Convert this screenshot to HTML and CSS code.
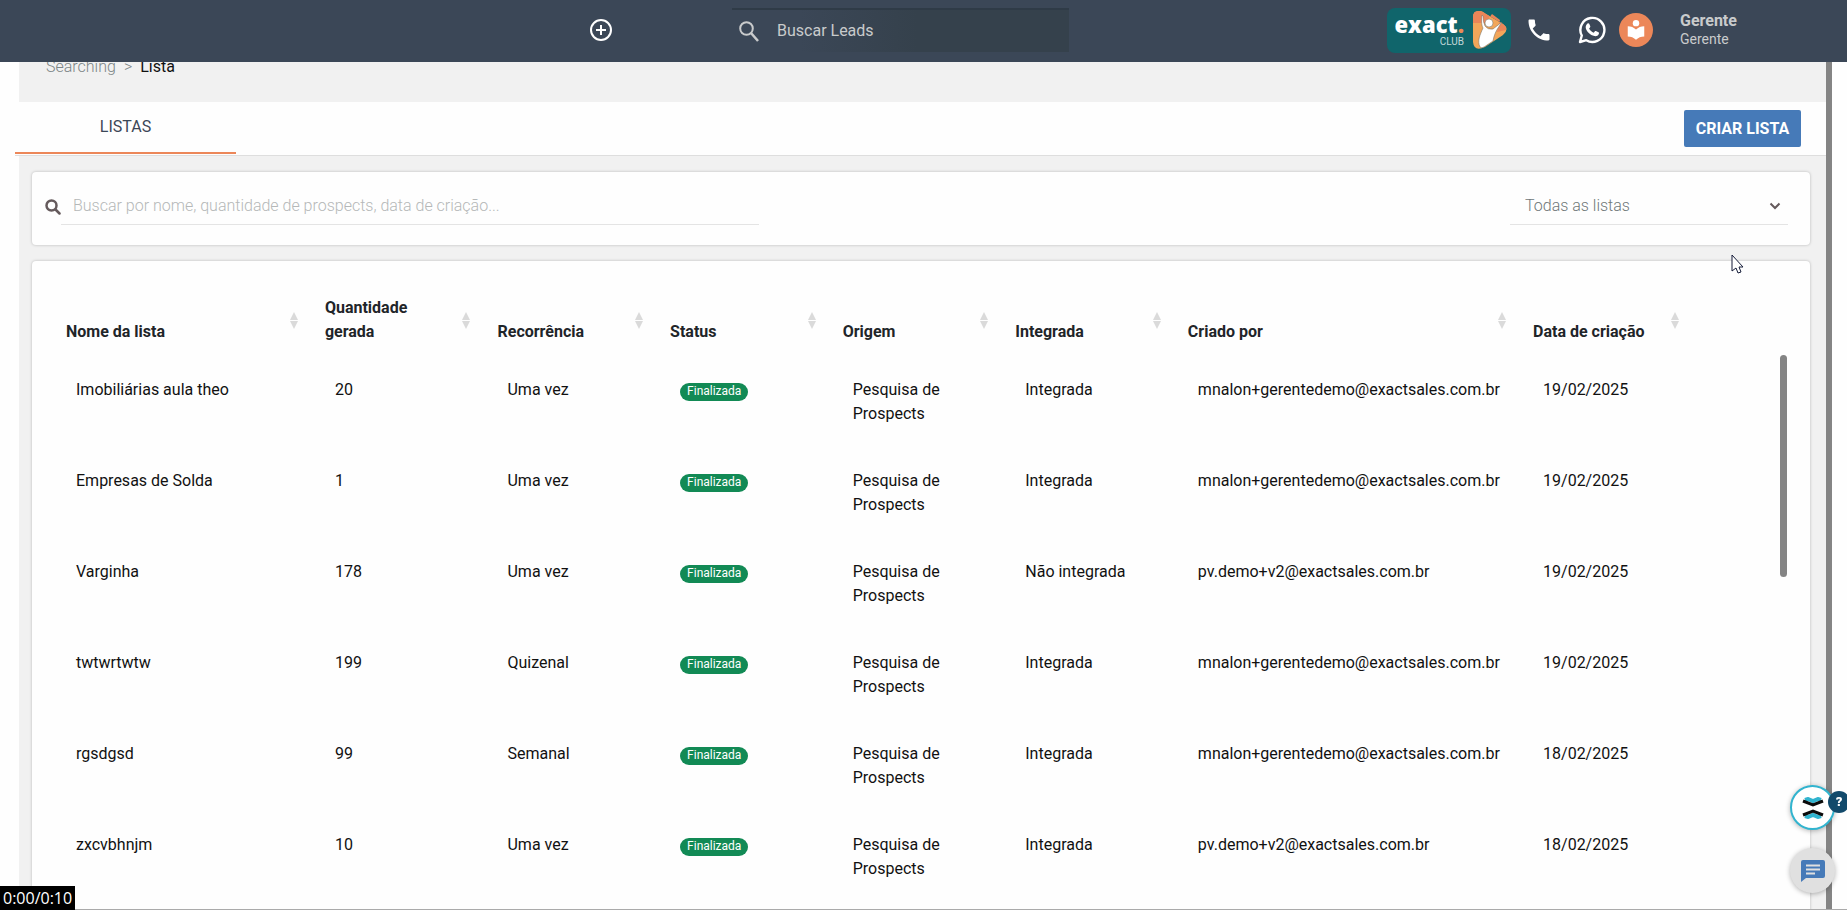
FILE: index.html
```html
<!DOCTYPE html>
<html lang="pt-BR">
<head>
    <meta charset="UTF-8">
    <meta name="viewport" content="width=device-width, initial-scale=1.0">
    <title>Listas</title>
    <link rel="stylesheet" href="styles.css">
</head>
<body>
<header class="topbar">
    <button class="icon-btn add-btn" type="button" aria-label="Adicionar">
        <svg width="24" height="24" viewBox="0 0 24 24" fill="none" stroke="#fff" stroke-width="2"><circle cx="12" cy="12" r="10"/><path d="M12 7v10M7 12h10"/></svg>
    </button>
    <label class="lead-search">
        <svg width="20" height="21" viewBox="0 0 20 21" fill="none" stroke="#c9cbcc" stroke-width="2"><circle cx="7.500" cy="7.500" r="6.300"/><path d="M12 12l7 8" stroke-width="2.500"/></svg>
        <input type="text" placeholder="Buscar Leads" aria-label="Buscar Leads">
    </label>
    <div class="top-actions">
        <a class="club" href="#">
            <span class="club-name">
                <strong>exact<span class="dot">.</span></strong>
                <small>CLUB</small>
            </span>
            <svg width="36" height="40" viewBox="0 0 36 40">
                <path d="M1 7Q1 0 8 1Q10 1 14 4L31 14Q38 19 31 25L13 37Q2 42 1 32Z" fill="#f2a65a"/>
                <path d="M1 13V7Q1 0 8 1Q10 1 14 4L31 14Q35 17 34 20L25 22L28 10L20 4L13 13Z" fill="#ea8558"/>
                <path d="M10 5C9 13 10 16 11 18C8 25 5 31 8 37Q10 39 15 35L21 31C22 25 24 21 26 18L30 12L21 19Q16 20 13 16Q11 12 11 6Z" fill="#fff" stroke="#6b665a" stroke-width=".5"/>
                <circle cx="17" cy="13" r="4" fill="#fff" stroke="#6b665a" stroke-width=".5"/>
            </svg>
        </a>
        <a class="phone" href="#" aria-label="Telefone">
            <svg width="28" height="28" viewBox="0 0 24 24" fill="#fff"><path d="M6.620 10.790c1.440 2.830 3.760 5.140 6.590 6.590l2.200-2.200c.27-.27.67-.36 1.020-.24 1.120.37 2.330.57 3.570.57.55 0 1 .45 1 1V20c0 .55-.45 1-1 1-9.390 0-17-7.610-17-17 0-.55.45-1 1-1h3.500c.55 0 1 .45 1 1 0 1.250.2 2.450.57 3.570.11.35.03.74-.25 1.020l-2.200 2.200z"/></svg>
        </a>
        <a class="whats" href="#" aria-label="WhatsApp">
            <svg width="28" height="28" viewBox="0 0 28 28"><path d="M2 26l1.800-6.500A12 12 0 1 1 8.300 24.200Z" fill="none" stroke="#fff" stroke-width="2.400" stroke-linejoin="round"/><path d="M9.500 7.500c.5-.5 1.400-.5 1.700.2l1.100 2.600c.1.400 0 .8-.3 1.100l-.9 1c1 2 2.600 3.400 4.600 4.300l1.200-1.500c.3-.3.7-.4 1-.2l2.600 1.300c.6.300.6 1 .3 1.700-.8 1.800-2.600 2.500-4.400 2.100-4.300-1-7.700-4.300-8.600-7.800-.4-1.800.3-3.600 1.700-4.800z" fill="#fff"/></svg>
        </a>
        <a class="reader" href="#" aria-label="Ajuda">
            <svg width="22" height="22" viewBox="0 0 24 24" fill="#fff"><circle cx="12" cy="4.500" r="3.500"/><path d="M12 11.550C9.640 9.350 6.480 8 3 8v11c3.480 0 6.640 1.350 9 3.550 2.360-2.190 5.520-3.550 9-3.550V8c-3.480 0-6.640 1.350-9 3.550z"/></svg>
        </a>
        <div class="user">
            <strong>Gerente</strong>
            <span>Gerente</span>
        </div>
    </div>
</header>

<div class="page">
    <main class="content">
        <nav class="breadcrumb">
            <a href="#">Searching</a>
            <span>&gt;</span>
            <span class="current">Lista</span>
        </nav>

        <div class="tabs">
            <a class="tab active" href="#">LISTAS</a>
            <button class="create-btn" type="button">CRIAR LISTA</button>
        </div>

        <section class="card filters">
            <svg class="filter-icon" width="16" height="16" viewBox="0 0 16 16" fill="none" stroke="#655a5c" stroke-width="2.500"><circle cx="6.500" cy="6.500" r="5"/><path d="M10.500 10.500l4 4" stroke-linecap="round"/></svg>
            <input class="filter-input" type="text" aria-label="Buscar" placeholder="Buscar por nome, quantidade de prospects, data de criação...">
            <label class="filter-select">
                <select aria-label="Filtrar listas">
                    <option>Todas as listas</option>
                </select>
                <svg width="12" height="8" viewBox="0 0 12 8" fill="none" stroke="#655a5c" stroke-width="2"><path d="M1.500 1.500L6 6l4.500-4.500"/></svg>
            </label>
        </section>

        <section class="card lists">
            <table class="lists-table">
                <colgroup>
                    <col class="w15"><col class="w10"><col class="w10"><col class="w10"><col class="w10"><col class="w10"><col class="w20"><col class="w10"><col class="w5">
                </colgroup>
                <thead>
                    <tr>
                        <th><div class="head">Nome da lista<i class="sort"></i></div></th>
                        <th><div class="head"><span>Quantidade<br>gerada</span><i class="sort"></i></div></th>
                        <th><div class="head">Recorrência<i class="sort"></i></div></th>
                        <th><div class="head">Status<i class="sort"></i></div></th>
                        <th><div class="head">Origem<i class="sort"></i></div></th>
                        <th><div class="head">Integrada<i class="sort"></i></div></th>
                        <th><div class="head">Criado por<i class="sort"></i></div></th>
                        <th><div class="head">Data de criação<i class="sort"></i></div></th>
                        <th></th>
                    </tr>
                </thead>
                <tbody>
                    <tr>
                        <td>Imobiliárias aula theo</td>
                        <td>20</td>
                        <td>Uma vez</td>
                        <td><span class="badge">Finalizada</span></td>
                        <td>Pesquisa de Prospects</td>
                        <td>Integrada</td>
                        <td>mnalon+gerentedemo@exactsales.com.br</td>
                        <td>19/02/2025</td>
                        <td></td>
                    </tr>
                    <tr>
                        <td>Empresas de Solda</td>
                        <td>1</td>
                        <td>Uma vez</td>
                        <td><span class="badge">Finalizada</span></td>
                        <td>Pesquisa de Prospects</td>
                        <td>Integrada</td>
                        <td>mnalon+gerentedemo@exactsales.com.br</td>
                        <td>19/02/2025</td>
                        <td></td>
                    </tr>
                    <tr>
                        <td>Varginha</td>
                        <td>178</td>
                        <td>Uma vez</td>
                        <td><span class="badge">Finalizada</span></td>
                        <td>Pesquisa de Prospects</td>
                        <td>Não integrada</td>
                        <td>pv.demo+v2@exactsales.com.br</td>
                        <td>19/02/2025</td>
                        <td></td>
                    </tr>
                    <tr>
                        <td>twtwrtwtw</td>
                        <td>199</td>
                        <td>Quizenal</td>
                        <td><span class="badge">Finalizada</span></td>
                        <td>Pesquisa de Prospects</td>
                        <td>Integrada</td>
                        <td>mnalon+gerentedemo@exactsales.com.br</td>
                        <td>19/02/2025</td>
                        <td></td>
                    </tr>
                    <tr>
                        <td>rgsdgsd</td>
                        <td>99</td>
                        <td>Semanal</td>
                        <td><span class="badge">Finalizada</span></td>
                        <td>Pesquisa de Prospects</td>
                        <td>Integrada</td>
                        <td>mnalon+gerentedemo@exactsales.com.br</td>
                        <td>18/02/2025</td>
                        <td></td>
                    </tr>
                    <tr>
                        <td>zxcvbhnjm</td>
                        <td>10</td>
                        <td>Uma vez</td>
                        <td><span class="badge">Finalizada</span></td>
                        <td>Pesquisa de Prospects</td>
                        <td>Integrada</td>
                        <td>pv.demo+v2@exactsales.com.br</td>
                        <td>18/02/2025</td>
                        <td></td>
                    </tr>
                </tbody>
            </table>
            <div class="table-scroll"></div>
        </section>
    </main>
    <div class="page-scroll"></div>
</div>

<div class="floating">
    <button class="fab assistant" type="button" aria-label="Assistente">
        <svg width="22" height="22" viewBox="0 0 22 22" fill="none" stroke-width="3"><path d="M3 3l3-1 5 2 5-2 3 1M3 19l3 1 5-2 5 2 3-1" stroke="#31b4cf" stroke-width="4"/><path d="M1 4l10 4 10-4M1 18l10-4 10 4" stroke="#0b0b0b"/></svg>
        <span class="help">?</span>
    </button>
    <button class="fab chat" type="button" aria-label="Chat">
        <svg width="24" height="24" viewBox="0 0 24 24"><path d="M2 1h20q2 0 2 2v14q0 2-2 2H5l-5 4V3q0-2 2-2z" fill="#467ab8"/><path d="M5 6.500h14M5 10.500h14M5 14.500h9" stroke="#e0e0e0" stroke-width="2"/></svg>
    </button>
</div>

<svg class="pointer" width="13" height="20" viewBox="0 0 13 20"><path d="M1 1v16l4-3 2 5 3-1-2-5h4z" fill="#fff" stroke="#141b38"/></svg>
<div class="player-time">0:00/0:10</div>
</body>
</html>
```
FILE: styles.css
```css
* {
    box-sizing: border-box;
}
body {
    margin: 0;
    height: 100vh;
    overflow: hidden;
    display: flex;
    flex-direction: column;
    background: #fefefe;
    color: #1f2529;
    font-family: Roboto, sans-serif;
    font-size: 16px;
    line-height: 24px;
    border-bottom: 1px solid #aaa;
}
a {
    color: inherit;
    text-decoration: none;
}
button, input, select {
    font: inherit;
}
svg {
    flex: none;
}

/* Top bar */
.topbar {
    position: relative;
    z-index: 2;
    flex: none;
    display: flex;
    align-items: center;
    height: 62px;
    padding: 0 111px 2px 589px;
    background: #3b4757;
}
.icon-btn {
    display: flex;
    padding: 0;
    border: none;
    background: none;
    cursor: pointer;
}
.lead-search {
    display: flex;
    align-items: center;
    gap: 18px;
    width: 337px;
    height: 44px;
    margin-left: 119px;
    padding-left: 7px;
    border-top: 2px solid #2f3b47;
    background: linear-gradient(90deg, #3b4757 20%, #35414c 55%);
}
.lead-search input {
    flex: 1;
    min-width: 0;
    padding: 0;
    border: none;
    outline: none;
    background: none;
    color: #c9cbcc;
}
.lead-search input::placeholder {
    color: #c9cbcc;
    opacity: 1;
}
.top-actions {
    display: flex;
    align-items: center;
    margin-left: auto;
}
.club {
    display: flex;
    align-items: center;
    gap: 8px;
    width: 124px;
    height: 45px;
    padding: 0 4px 0 8px;
    border-radius: 8px;
    background: #10656b;
    color: #fff;
}
.club-name {
    display: flex;
    flex-direction: column;
    align-items: flex-end;
    width: 69px;
}
.club-name strong {
    font: 800 22px/24px "Open Sans", sans-serif;
}
.club-name small {
    font-size: 10px;
    line-height: 12px;
    color: #c3d8d9;
}
.dot {
    color: #ee8a55;
}
.phone, .whats {
    display: flex;
}
.phone {
    margin-left: 14px;
}
.whats {
    margin-left: 25px;
}
.reader {
    display: flex;
    align-items: center;
    justify-content: center;
    width: 34px;
    height: 34px;
    margin-left: 13px;
    border-radius: 50%;
    background: #ec8759;
}
.user {
    display: flex;
    flex-direction: column;
    width: 56px;
    margin-left: 27px;
    color: #c9cbcc;
    font-size: 14px;
    line-height: 18px;
}
.user strong {
    font-size: 16px;
}

/* Page */
.page {
    flex: 1;
    min-height: 0;
    display: flex;
    padding: 0 15px 0 19px;
}
.content {
    flex: 1;
    min-width: 0;
    background: #f1f1f1;
}
.page-scroll {
    width: 6px;
    background: #848484;
}
.breadcrumb {
    display: flex;
    gap: 8px;
    margin-top: -7px;
    padding: 0 27px 23px;
    color: #7c8586;
    font-weight: 300;
}
.breadcrumb .current {
    color: #111;
    font-weight: 400;
}
.tabs {
    display: flex;
    justify-content: space-between;
    align-items: center;
    height: 54px;
    margin-left: -4px;
    padding-right: 25px;
    border-bottom: 1px solid #dedede;
    background: #fefefe;
}
.tab {
    width: 221px;
    height: 51px;
    padding-top: 12px;
    border-bottom: 2px solid #ec8759;
    color: #3b4757;
    text-align: center;
}
.create-btn {
    width: 117px;
    height: 37px;
    padding: 0;
    border: none;
    border-radius: 2px;
    background: #467ab8;
    color: #fff;
    font-weight: 700;
    cursor: pointer;
}
.card {
    margin: 16px 16px 0 13px;
    border-radius: 4px;
    background: #fefefe;
    box-shadow: 0 0 3px rgba(0, 0, 0, 0.25);
}
.filters {
    display: flex;
    align-items: center;
    height: 73px;
    padding: 0 22px 4px 13px;
    font-weight: 300;
}
.filter-input {
    width: 698px;
    height: 36px;
    padding: 0 12px 2px;
    border: none;
    border-bottom: 1px solid #e4e4e4;
    outline: none;
    background: none;
}
.filter-input::placeholder {
    color: #b5b8b8;
    opacity: 1;
}
.filter-select {
    display: flex;
    align-items: center;
    width: 278px;
    height: 36px;
    margin-left: auto;
    padding: 0 7px 0 15px;
    border-bottom: 1px solid #e4e4e4;
}
.filter-select select {
    flex: 1;
    padding: 0;
    border: none;
    outline: none;
    appearance: none;
    background: none;
    color: #6f7778;
}

/* Lists table */
.lists {
    display: flex;
    height: 800px;
    padding: 35px 23px 0 25px;
}
.lists-table {
    flex: 1;
    align-self: flex-start;
    table-layout: fixed;
    border-collapse: collapse;
    text-align: left;
}
.w5 {
    width: 5%;
}
.w10 {
    width: 10%;
}
.w15 {
    width: 15%;
}
.w20 {
    width: 20%;
}
.lists-table th {
    padding: 0 18px 0 9px;
}
.head {
    display: flex;
    align-items: flex-end;
    justify-content: space-between;
    height: 48px;
    white-space: nowrap;
}
.lists-table td {
    height: 91px;
    padding: 34px 8px 9px 19px;
    color: #111;
    vertical-align: top;
}
.sort {
    align-self: center;
    display: flex;
    flex-direction: column;
    gap: 1px;
}
.sort::before, .sort::after {
    content: "";
    border: 4px solid transparent;
}
.sort::before {
    border-top: none;
    border-bottom: 8px solid #dadada;
}
.sort::after {
    border-bottom: none;
    border-top: 8px solid #dadada;
}
.badge {
    display: inline-block;
    height: 18px;
    padding: 0 7px;
    border-radius: 9px;
    background: #128a55;
    color: #fff;
    font-size: 12px;
    line-height: 16px;
}
.table-scroll {
    width: 7px;
    height: 222px;
    margin: 59px 0 0 -3px;
    border-radius: 4px;
    background: #848484;
}

/* Things floating over the page */
.floating {
    position: fixed;
    right: 12px;
    bottom: 17px;
    z-index: 3;
    display: flex;
    flex-direction: column;
    gap: 18px;
}
.fab {
    position: relative;
    display: flex;
    align-items: center;
    justify-content: center;
    width: 45px;
    height: 45px;
    padding: 0;
    border: none;
    border-radius: 50%;
    box-shadow: 0 1px 5px rgba(0, 0, 0, 0.3);
    cursor: pointer;
}
.assistant {
    border: 2px solid #31b4cf;
    background: #fff;
}
.chat {
    background: #e0e0e0;
}
.help {
    position: absolute;
    top: 4px;
    right: -17px;
    width: 22px;
    height: 22px;
    border-radius: 50%;
    background: #124a6b;
    color: #fff;
    font-size: 13px;
    font-weight: 900;
    line-height: 22px;
}
.pointer {
    position: fixed;
    top: 254px;
    right: 103px;
}
.player-time {
    position: fixed;
    left: 0;
    bottom: 0;
    padding: 0 3px;
    background: #000;
    color: #fff;
    font-family: "Open Sans", sans-serif;
}
```
